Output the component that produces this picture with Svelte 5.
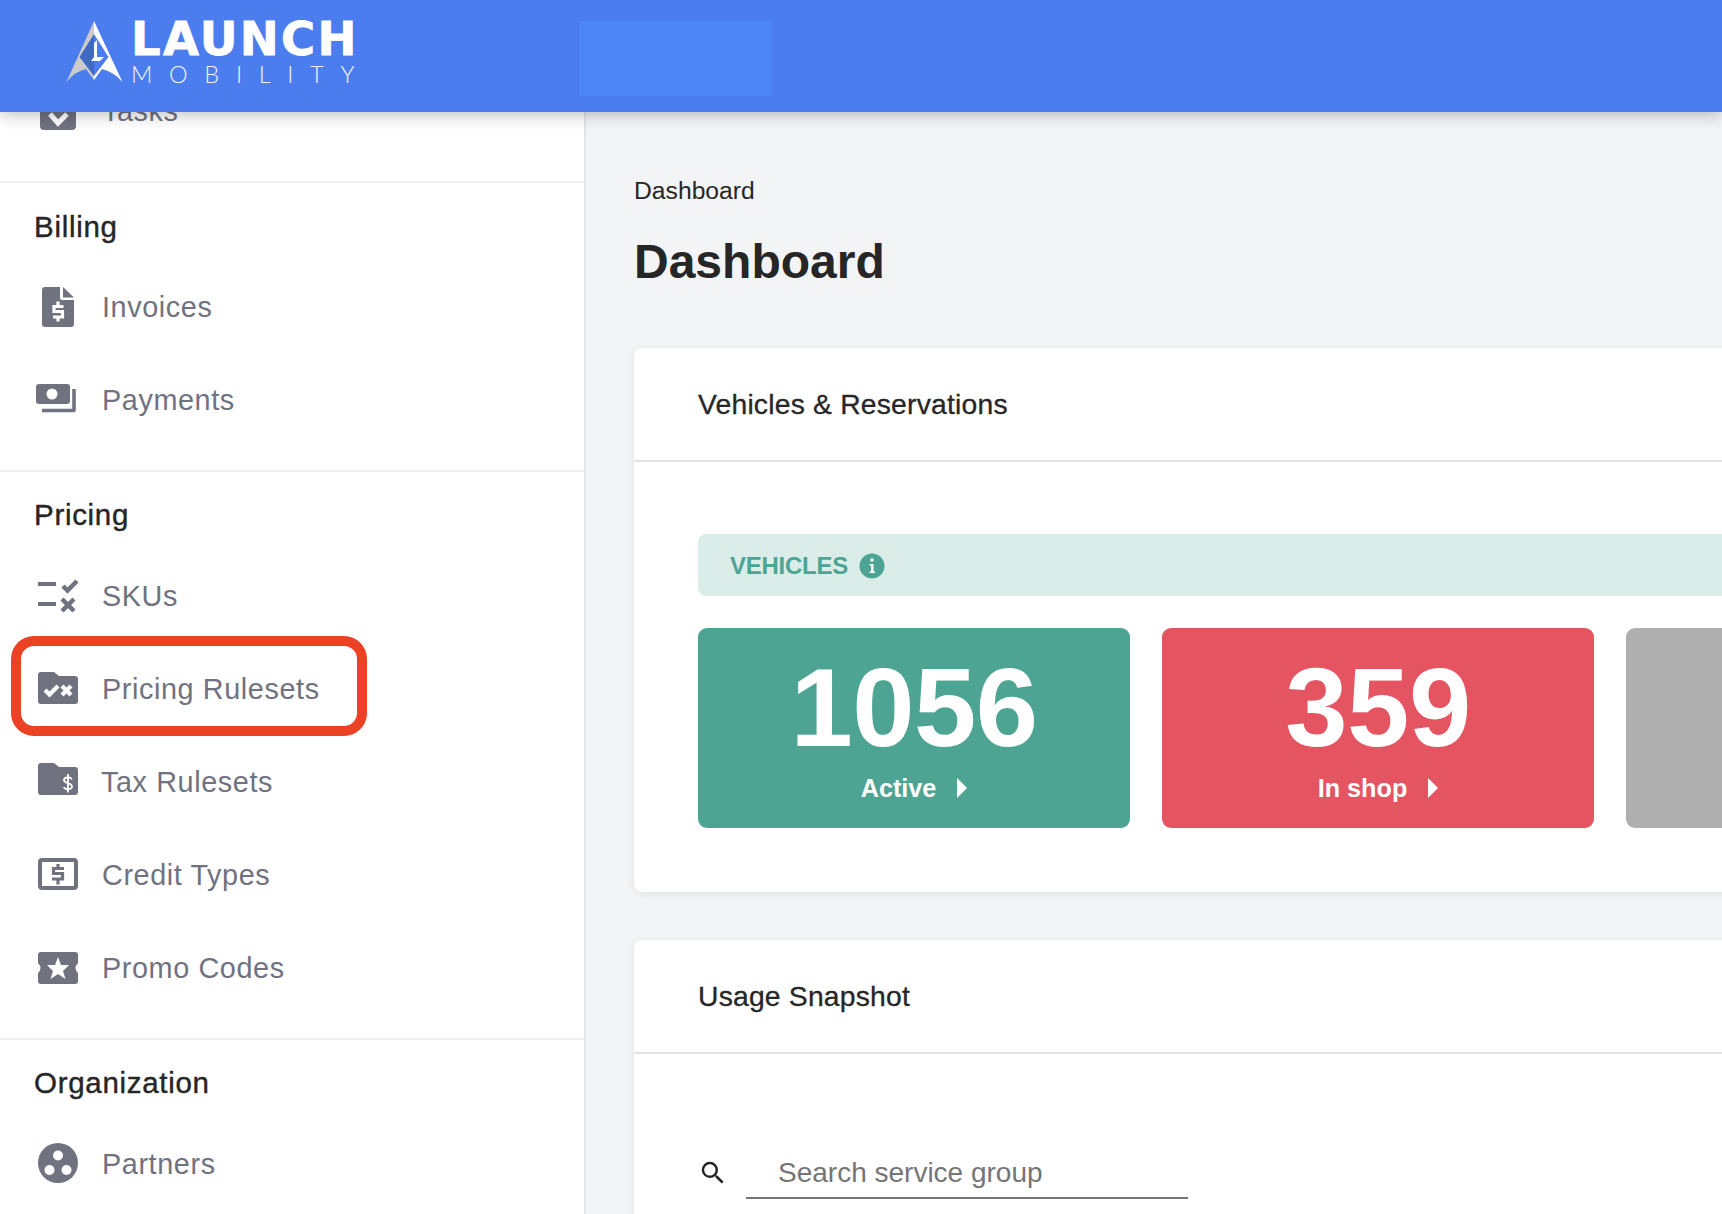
<script>
  const stats = [
    { n: '1056', label: 'Active', tone: 'teal' },
    { n: '359', label: 'In shop', tone: 'red' },
    { n: '', label: '', tone: 'gray' }
  ];
</script>

<div class="page">
  <header class="top">
    <div class="brand">
      <svg class="mark" viewBox="60 15 70 72" width="70" height="72" aria-hidden="true">
        <path d="M94 21 66.500 82Q74 72 86 69L94 80Z" fill="#cbcbcb" />
        <path d="M94 21 122.500 82Q114 72 102 69L94 80Z" fill="#fff" />
        <path d="M94 34 79.500 57 94 76Z" fill="#3f69c2" />
        <path d="M94 34 108.500 57 94 76Z" fill="#4c7def" />
        <path d="M94 43 97 40 97 57 104 57 100 61 91 61 94 57Z" fill="#fff" />
      </svg>
      <div class="word">
        <span class="launch">LAUNCH</span>
        <span class="mobility">MOBILITY</span>
      </div>
    </div>
    <div class="redacted"></div>
  </header>

  <div class="shell">
    <aside class="side">
      <section class="group first">
        <a class="row">
          <svg class="ico" viewBox="0 0 40 40"><rect x="2" y="2" width="36" height="36" rx="4" /><path d="M12 22 20 31 29 22" fill="none" stroke="#fff" stroke-width="5" /></svg>
          <span>Tasks</span>
        </a>
      </section>

      <section class="group billing">
        <h3>Billing</h3>
        <a class="row">
          <svg class="ico" viewBox="0 0 40 40">
            <path d="M7 -1H22V10Q22 12 24 12H36V36Q36 39 33 39H7Q4 39 4 36V2Q4 -1 7 -1Z" />
            <path d="M25 -1 36 9.500H25Z" />
            <path d="M25.500 18.500H16V23.500H24.500V29H15M20 13.500V18M20 29V33.500" fill="none" stroke="#fff" stroke-width="3.200" />
          </svg>
          <span>Invoices</span>
        </a>
        <a class="row">
          <svg class="ico" viewBox="0 0 40 40">
            <rect x="-2" y="3" width="34" height="20" rx="3" />
            <circle cx="14" cy="13" r="5.500" fill="#fff" />
            <path d="M36 8V29Q36 29.500 35 29.500H4" fill="none" stroke="#70727f" stroke-width="3.600" />
          </svg>
          <span>Payments</span>
        </a>
      </section>

      <section class="group">
        <h3>Pricing</h3>
        <a class="row">
          <svg class="ico" viewBox="0 0 40 40">
            <path d="M0 8H18M0 28H18" fill="none" stroke="#70727f" stroke-width="4" />
            <path d="M25 10 29.500 14.500 39 5M24 23 36 35M36 23 24 35" fill="none" stroke="#70727f" stroke-width="4.500" />
          </svg>
          <span>SKUs</span>
        </a>
        <a class="row">
          <svg class="ico" viewBox="0 0 40 40">
            <path d="M3 3H16L21 7H37Q40 7 40 10V32Q40 35 37 35H3Q0 35 0 32V6Q0 3 3 3Z" />
            <path d="M7 21 11.500 25.500 20 17M24 17 33 26M33 17 24 26" fill="none" stroke="#fff" stroke-width="4.200" />
          </svg>
          <span>Pricing Rulesets</span>
        </a>
        <a class="row tax">
          <svg class="ico" viewBox="0 0 40 40">
            <path d="M3 1H16L21 5H37Q40 5 40 8V30Q40 33 37 33H3Q0 33 0 30V4Q0 1 3 1Z" />
            <path d="M33.500 17.500C33.500 14.500 26 14.500 26 18 26 22 34 20 34 24.500 34 28 26 28 26 25M30 12V30.500" fill="none" stroke="#fff" stroke-width="1.800" />
          </svg>
          <span>Tax Rulesets</span>
        </a>
        <a class="row">
          <svg class="ico" viewBox="0 0 40 40">
            <rect x="2" y="5" width="36" height="28" rx="2" fill="none" stroke="#70727f" stroke-width="4" />
            <path d="M26 13.500H15.500V18.500H24.500V24H14M20 9V13M20 24.500V29.500" fill="none" stroke="#70727f" stroke-width="3.200" />
          </svg>
          <span>Credit Types</span>
        </a>
        <a class="row">
          <svg class="ico" viewBox="0 0 40 40">
            <path d="M3 4H37Q40 4 40 7V15Q35 20 40 25V33Q40 36 37 36H3Q0 36 0 33V25Q5 20 0 15V7Q0 4 3 4Z" />
            <path d="M20 9 23 17 31 17 25 23 27.500 31 20 26 12.500 31 15 23 9 17 17 17Z" fill="#fff" />
          </svg>
          <span>Promo Codes</span>
        </a>
      </section>

      <section class="group">
        <h3>Organization</h3>
        <a class="row">
          <svg class="ico" viewBox="0 0 40 40">
            <circle cx="20" cy="19" r="20" />
            <circle cx="20" cy="11.500" r="5" fill="#fff" />
            <circle cx="11.500" cy="26" r="5" fill="#fff" />
            <circle cx="28.500" cy="26" r="5" fill="#fff" />
          </svg>
          <span>Partners</span>
        </a>
      </section>

      <div class="callout"></div>
    </aside>

    <main class="main">
      <div class="crumb">Dashboard</div>
      <h1>Dashboard</h1>

      <section class="card">
        <div class="card-head">Vehicles &amp; Reservations</div>
        <div class="card-body">
          <div class="band">
            <span>VEHICLES</span>
            <svg viewBox="0 0 26 26" width="26" height="26" aria-hidden="true">
              <circle cx="13" cy="13" r="12.500" fill="#4da493" />
              <rect x="11.500" y="5.500" width="3" height="3" fill="#fff" />
              <path d="M10.500 11H14.500V18.500H16V20H10.500V18.500H12V12.500H10.500Z" fill="#fff" />
            </svg>
          </div>
          <div class="tiles">
            {#each stats as s}
              <div class="tile {s.tone}">
                {#if s.n}
                  <div class="num">{s.n}</div>
                  <div class="lab"><span>{s.label}</span><i class="tri"></i></div>
                {/if}
              </div>
            {/each}
          </div>
        </div>
      </section>

      <section class="card second">
        <div class="card-head">Usage Snapshot</div>
        <div class="search">
          <svg viewBox="0 0 24 24" width="30" height="30" aria-hidden="true">
            <path fill="#222" d="M15.500 14h-.79l-.28-.27A6.470 6.470 0 0 0 16 9.500 6.500 6.500 0 1 0 9.500 16c1.610 0 3.090-.59 4.230-1.570l.27.28v.79l5 4.990L20.490 19l-4.990-5zm-6 0C7.010 14 5 11.990 5 9.500S7.010 5 9.500 5 14 7.010 14 9.500 11.990 14 9.500 14z" />
          </svg>
          <div class="field">Search service group</div>
        </div>
      </section>
    </main>
  </div>
</div>

<style>
  :global(body) {
    margin: 0;
    overflow: hidden;
    background: #f3f4f6;
    font-family: "Liberation Sans", Arial, sans-serif;
  }
  .page {
    height: 1214px;
    overflow: hidden;
    display: flex;
    flex-direction: column;
  }
  .top {
    position: relative;
    z-index: 2;
    flex: 0 0 112px;
    display: flex;
    background: #4c7def;
    box-shadow: 0 2px 16px rgba(0, 0, 0, 0.28);
  }
  .brand {
    width: 579px;
    display: flex;
    padding: 15px 0 0 60px;
    box-sizing: border-box;
  }
  .mark { flex: none; margin-right: 1px; }
  .word { display: flex; flex-direction: column; color: #fff; margin-top: 7px; }
  .launch {
    font: 700 46.500px/34px "DejaVu Sans", sans-serif;
    letter-spacing: 2.300px;
    -webkit-text-stroke: 0.8px #fff;
  }
  .mobility {
    font: 300 23.500px/20px "Lato", sans-serif;
    letter-spacing: 16.700px;
    margin-top: 8px;
    opacity: 0.92;
  }
  .redacted {
    width: 193px;
    height: 75px;
    margin-top: 21px;
    background: #4d86f7;
  }
  .shell { flex: 1; display: flex; min-height: 0; }
  .side {
    position: relative;
    flex: 0 0 584px;
    background: #fff;
    border-right: 2px solid #e3e5e9;
    overflow: hidden;
  }
  .group { border-top: 2px solid #eeeff0; padding-bottom: 23px; }
  .group.first { border-top: 0; margin-top: -47px; padding-bottom: 23px; }
  .group.billing { padding-bottom: 22.500px; }
  h3 {
    margin: 0;
    height: 78px;
    box-sizing: border-box;
    padding: 25px 0 0 34px;
    font-size: 29.500px;
    line-height: 36px;
    font-weight: 400;
    letter-spacing: 0.7px;
    color: #262626;
    -webkit-text-stroke: 0.4px #262626;
  }
  .billing h3 { padding-top: 26px; }
  .row {
    display: flex;
    align-items: center;
    height: 93px;
    padding-left: 38px;
    color: #70727f;
    font-size: 28.800px;
    letter-spacing: 0.6px;
  }
  .row.tax span { margin-left: -1px; }
  .ico {
    flex: none;
    width: 40px;
    height: 40px;
    margin-right: 24px;
    fill: #70727f;
    overflow: visible;
  }
  .callout {
    position: absolute;
    left: 11px;
    top: 524px;
    width: 356px;
    height: 100px;
    box-sizing: border-box;
    border: 10px solid #eb4125;
    border-radius: 23px;
  }
  .main {
    flex: 1;
    min-width: 0;
    overflow: hidden;
    padding: 65px 0 0 48px;
    color: #262626;
  }
  .crumb { font-size: 24.700px; line-height: 28px; }
  h1 {
    margin: 27px 0 56px;
    font-size: 48px;
    line-height: 60px;
    font-weight: 700;
  }
  .card {
    margin-right: -20px;
    background: #fff;
    border-radius: 8px;
    box-shadow: 0 2px 10px rgba(0, 0, 0, 0.08);
  }
  .second { margin-top: 48px; padding-bottom: 80px; }
  .card-head {
    height: 114px;
    box-sizing: border-box;
    padding-left: 64px;
    display: flex;
    align-items: center;
    border-bottom: 2px solid #e4e4e4;
    font-size: 28.300px;
    letter-spacing: 0.2px;
    -webkit-text-stroke: 0.3px #262626;
  }
  .card-body { padding: 72px 0 64px 64px; }
  .band {
    height: 62px;
    box-sizing: border-box;
    padding: 1px 0 0 32px;
    display: flex;
    align-items: center;
    gap: 11px;
    background: #dbede8;
    border-radius: 8px 0 0 8px;
    color: #4da493;
    font-size: 24px;
    font-weight: 700;
    letter-spacing: -0.250px;
  }
  .tiles {
    display: grid;
    grid-template-columns: repeat(3, 432px);
    gap: 32px;
    margin-top: 32px;
  }
  .tile {
    height: 200px;
    box-sizing: border-box;
    padding-top: 24px;
    border-radius: 9px;
    color: #fff;
    text-align: center;
  }
  .teal { background: #4da493; }
  .red { background: #e55461; }
  .gray { background: #afafaf; }
  .num { font-size: 112px; line-height: 112px; font-weight: 700; letter-spacing: -0.500px; }
  .lab {
    margin-top: 6px;
    display: flex;
    justify-content: center;
    align-items: center;
    gap: 21px;
    font-size: 25.200px;
    line-height: 36px;
    font-weight: 700;
  }
  .tri {
    width: 0;
    height: 0;
    border-left: 10px solid #fff;
    border-top: 10px solid transparent;
    border-bottom: 10px solid transparent;
  }
  .search {
    display: flex;
    align-items: center;
    gap: 18px;
    padding: 93px 0 0 64px;
  }
  .field {
    width: 442px;
    height: 52px;
    box-sizing: border-box;
    padding: 2px 0 0 32px;
    display: flex;
    align-items: center;
    border-bottom: 2px solid #757575;
    color: #757575;
    font-size: 28px;
  }
</style>
